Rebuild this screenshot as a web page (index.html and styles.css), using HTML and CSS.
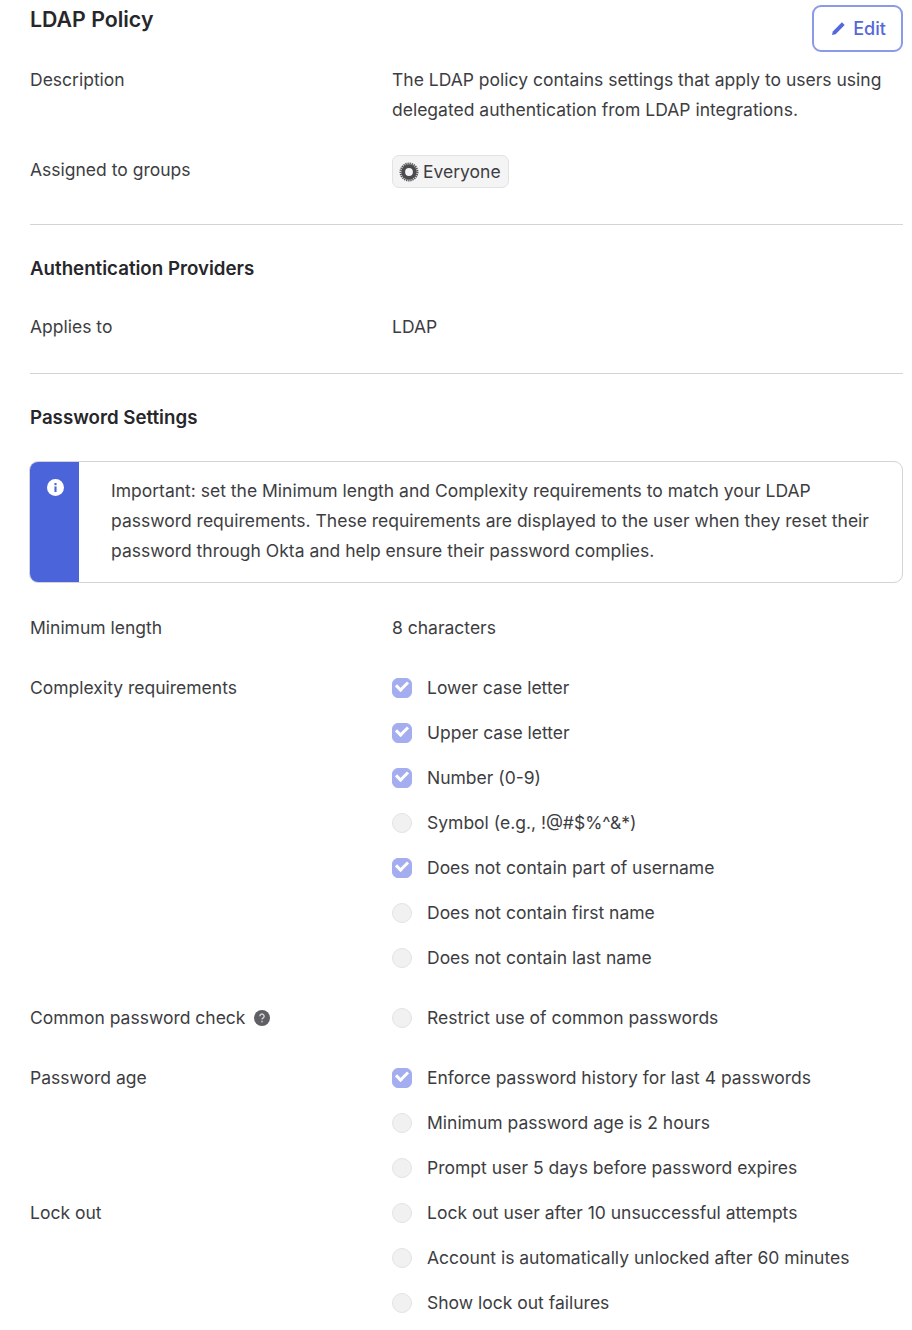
FILE: index.html
```html
<!DOCTYPE html>
<html lang="en">
<head>
<meta charset="utf-8">
<title>LDAP Policy</title>
<link rel="stylesheet" href="styles.css">
</head>
<body>
<main class="page">
  <header class="head">
    <h1 class="title">LDAP Policy</h1>
    <button class="edit" type="button">
      <svg class="edit-icon" viewBox="0 0 16 16"><path d="M1 15l.8-3.6L10.9 2.3l2.8 2.8-9.1 9.1z"/></svg>
      Edit
    </button>
  </header>
  <section class="row row-desc">
    <div class="label">Description</div>
    <div class="value">The LDAP policy contains settings that apply to users using<br>delegated authentication from LDAP integrations.</div>
  </section>
  <section class="row row-groups">
    <div class="label">Assigned to groups</div>
    <div class="value">
      <span class="chip">
        <svg class="chip-icon" viewBox="0 0 20 20"><circle cx="10" cy="10" r="5.8" fill="none" stroke="#4a4a4f" stroke-width="3.8"/><circle cx="10" cy="10" r="8.4" fill="none" stroke="#55555a" stroke-width="2.2" stroke-dasharray="1.3 0.8"/></svg>
        Everyone
      </span>
    </div>
  </section>
  <hr class="rule">
  <h2 class="sub">Authentication Providers</h2>
  <section class="row row-applies">
    <div class="label">Applies to</div>
    <div class="value">LDAP</div>
  </section>
  <hr class="rule">
  <h2 class="sub">Password Settings</h2>
  <aside class="callout">
    <div class="callout-side">
      <svg class="info" viewBox="0 0 16 16"><circle cx="8" cy="8" r="8" fill="#fff"/><rect x="7" y="7" width="2" height="5.2" fill="#4c64d9"/><rect x="7" y="3.8" width="2" height="2" fill="#4c64d9"/></svg>
    </div>
    <p class="callout-text">Important: set the Minimum length and Complexity requirements to match your LDAP password requirements. These requirements are displayed to the user when they reset their password through Okta and help ensure their password complies.</p>
  </aside>
  <section class="row row-min">
    <div class="label">Minimum length</div>
    <div class="value">8 characters</div>
  </section>
  <section class="row group">
    <div class="label">Complexity requirements</div>
    <ul class="checks">
      <li class="check on">Lower case letter</li>
      <li class="check on">Upper case letter</li>
      <li class="check on">Number (0-9)</li>
      <li class="check">Symbol (e.g., !@#$%^&amp;*)</li>
      <li class="check on">Does not contain part of username</li>
      <li class="check">Does not contain first name</li>
      <li class="check">Does not contain last name</li>
    </ul>
  </section>
  <section class="row group">
    <div class="label">Common password check
      <svg class="help" viewBox="0 0 16 16"><circle cx="8" cy="8" r="8" fill="#5f5f64"/><path d="M5.9 6.2a2.1 2.1 0 1 1 3.3 1.7c-.8.5-1.2.9-1.2 1.7" fill="none" stroke="#d5d5d8" stroke-width="1.4"/><rect x="7.3" y="10.8" width="1.4" height="1.5" fill="#d5d5d8"/></svg>
    </div>
    <ul class="checks">
      <li class="check">Restrict use of common passwords</li>
    </ul>
  </section>
  <section class="row">
    <div class="label">Password age</div>
    <ul class="checks">
      <li class="check on">Enforce password history for last 4 passwords</li>
      <li class="check">Minimum password age is 2 hours</li>
      <li class="check">Prompt user 5 days before password expires</li>
    </ul>
  </section>
  <section class="row">
    <div class="label">Lock out</div>
    <ul class="checks">
      <li class="check">Lock out user after 10 unsuccessful attempts</li>
      <li class="check">Account is automatically unlocked after 60 minutes</li>
      <li class="check">Show lock out failures</li>
    </ul>
  </section>
</main>
</body>
</html>
```
FILE: styles.css
```css
*, *::before, *::after { box-sizing: border-box; }
html, body { margin: 0; background: #fff; }
body {
  font-family: Inter, "Liberation Sans", sans-serif;
  font-size: 17.5px;
  line-height: 30px;
  color: #3d3d42;
  overflow: hidden;
  height: 1330px;
}
.page { width: 873px; margin-left: 30px; padding-top: 4px; }
.head { display: flex; justify-content: space-between; align-items: flex-start; height: 61px; }
.title { margin: 0; font-size: 21.3px; font-weight: 600; line-height: 30px; color: #27272b; }
.edit {
  display: flex; align-items: center; justify-content: center; gap: 6px;
  width: 91px; height: 47px; margin-top: 1px; padding: 0 0 1px 2px;
  background: #fff; border: 2px solid #8b9ae8; border-radius: 9px;
  color: #5468d9; font: 500 18px Inter, sans-serif;
}
.edit-icon { width: 16px; height: 16px; fill: #5468d9; }
.row { display: grid; grid-template-columns: 362px 511px; }
.row-desc { height: 90px; }
.row-groups { height: 69px; }
.row-applies { height: 61px; }
.row-min { height: 60px; }
.group { margin-bottom: 15px; }
.label { display: flex; align-items: flex-start; gap: 9px; height: 30px; }
.help { width: 16px; height: 16px; margin-top: 7px; }
.chip {
  display: flex; width: fit-content; align-items: center; gap: 4px;
  height: 33px; padding: 0 7px 0 6px;
  background: #f4f4f5; border: 1px solid #e2e2e4; border-radius: 7px;
}
.chip-icon { width: 20px; height: 20px; }
.rule { height: 1px; width: 873px; margin: 0; border: 0; background: #d4d4d6; }
.sub { margin: 0; height: 87px; padding-top: 29px; font-size: 18.7px; font-weight: 600; line-height: 30px; color: #27272b; }
.callout {
  display: flex; width: 874px; height: 122px; margin: 0 0 30px -1px;
  background: #fff; border: 1px solid #d4d4d6; border-radius: 9px; overflow: hidden;
}
.callout-side { flex: 0 0 50px; margin: -1px 0 -1px -1px; padding: 18px 0 0 18px; background: #4c64d9; }
.info { display: block; width: 17px; height: 17px; }
.callout-text { margin: 0; padding: 14px 20px 0 32px; flex: 1; }
.checks { margin: 0; padding: 0; list-style: none; }
.check { position: relative; height: 45px; padding-left: 35px; }
.check::before {
  content: ""; position: absolute; left: 0; top: 5px;
  width: 20px; height: 20px; border-radius: 6px;
  background: #f1f1f2; border: 1px solid #e3e3e5;
}
.check:not(.on)::before { border-radius: 50%; }
.check.on::before { background: #a3adf0; border-color: #a3adf0; }
.check.on::after {
  content: ""; position: absolute; left: 4px; top: 8px;
  width: 12px; height: 8px;
  border-left: 3px solid #fff; border-bottom: 3px solid #fff;
  transform: rotate(-45deg);
}
```
